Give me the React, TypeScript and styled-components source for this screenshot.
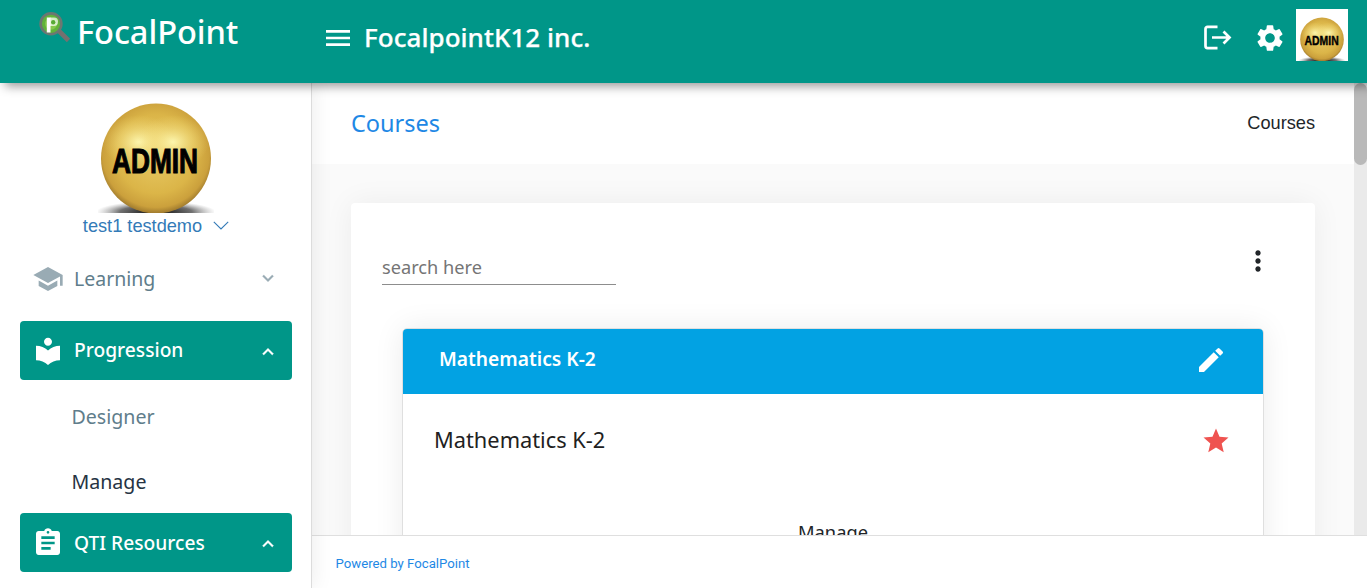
import React, { useId } from "react";
import styled, { createGlobalStyle } from "styled-components";
import {
  MdMenu,
  MdSettings,
  MdEdit,
  MdStar,
  MdMoreVert,
  MdSchool,
  MdLocalLibrary,
  MdAssignment,
} from "react-icons/md";

const Global = createGlobalStyle`
  * { box-sizing: border-box; }
  body { margin: 0; overflow: hidden; background: #fff; font-family: "Noto Sans", sans-serif; }
  svg { display: block; flex: none; }
`;

const Page = styled.div`
  display: flex;
  flex-direction: column;
  width: 1367px;
  height: 588px;
  overflow: hidden;
`;

const Header = styled.header`
  position: relative;
  z-index: 3;
  display: flex;
  flex: none;
  height: 83px;
  padding-right: 19px;
  background: #009688;
  color: #fff;
  box-shadow: 5px 3px 10px rgba(0, 0, 0, 0.42);
`;

const Brand = styled.div`
  display: flex;
  align-items: flex-start;
  width: 322px;
  padding: 10px 0 0 38px;
`;

const BrandName = styled.span`
  margin: -1px 0 0 5px;
  font-size: 32.6px;
  font-weight: 500;
  letter-spacing: -0.08px;
  line-height: 45px;
  white-space: nowrap;
`;

const HeaderTitle = styled.div`
  display: flex;
  align-items: center;
  gap: 10px;
  height: 75px;
  font-size: 26px;
  font-weight: 500;
  white-space: nowrap;
`;

const HeaderTitleText = styled.span`
  padding-bottom: 2px;
  letter-spacing: 0.04px;
  -webkit-text-stroke: 0.25px #fff;
`;

const HeaderActions = styled.div`
  display: flex;
  align-items: center;
  gap: 22px;
  height: 75px;
  margin-left: auto;
`;

const AvatarFrame = styled.div`
  display: flex;
  align-items: flex-end;
  justify-content: center;
  width: 52px;
  height: 52px;
  margin: -5px 0 0 -11.5px;
  background: #fff;
`;

const Body = styled.div`
  display: flex;
  flex: 1;
  min-height: 0;
`;

const Sidebar = styled.aside`
  position: relative;
  z-index: 2;
  flex: none;
  width: 312px;
  padding: 14px 19px 0 20px;
  background: #fff;
  border-right: 1px solid #dcdcdc;
  box-shadow: 1px 0 20px rgba(0, 0, 0, 0.08);
`;

const Profile = styled.div`
  display: flex;
  flex-direction: column;
  align-items: center;
  height: 152px;
`;

const UserLink = styled.a`
  display: flex;
  align-items: center;
  gap: 11px;
  color: #337ab7;
  font-family: "Liberation Sans", sans-serif;
  font-size: 18.2px;
  line-height: 26px;
  white-space: nowrap;
`;

const UserCaret = styled.svg`
  margin-top: -2px;
`;

const MenuItem = styled.div<{ $active?: boolean }>`
  display: flex;
  align-items: center;
  height: 59px;
  margin-bottom: ${(p) => (p.$active ? 0 : "13px")};
  padding: 0 13px 0 12px;
  border-radius: 4px;
  background: ${(p) => (p.$active ? "#009688" : "transparent")};
  color: ${(p) => (p.$active ? "#fff" : "#99abb4")};
`;

const MenuLabel = styled.span<{ $active?: boolean; $raised?: boolean }>`
  flex: 1;
  margin-left: 10px;
  padding-bottom: ${(p) => (p.$raised ? "2px" : 0)};
  color: ${(p) => (p.$active ? "#fff" : "#607d8b")};
  font-size: ${(p) => (p.$active ? "19.2px" : "19.5px")};
  font-weight: ${(p) => (p.$active ? 500 : 400)};
`;

const SubMenu = styled.div`
  height: 133px;
  padding: 4px 0 0 51.5px;
`;

const SubItem = styled.div<{ $current?: boolean }>`
  height: 65px;
  color: ${(p) => (p.$current ? "#263343" : "#607d8b")};
  font-size: 19.6px;
  line-height: 65px;
`;

const Main = styled.main`
  display: flex;
  flex: 1;
  flex-direction: column;
  min-width: 0;
`;

const ScrollArea = styled.div`
  display: flex;
  flex: 1;
  min-height: 0;
`;

const Content = styled.div`
  flex: 1;
  overflow: hidden;
  background: #fafafa;
`;

const ScrollTrack = styled.div`
  width: 13px;
  background: #eaeaea;
`;

const ScrollThumb = styled.div`
  height: 82px;
  border-radius: 6.5px;
  background: #b9b9b9;
`;

const TitleBar = styled.div`
  display: flex;
  align-items: center;
  justify-content: space-between;
  height: 81px;
  padding: 0 39px;
  background: #fff;
`;

const PageTitle = styled.h1`
  margin: 0;
  padding-bottom: 2px;
  color: #1e88e5;
  font-size: 23.5px;
  font-weight: 400;
`;

const Crumb = styled.span`
  color: #212529;
  font-family: "Liberation Sans", sans-serif;
  font-size: 18.2px;
`;

const Card = styled.section`
  height: 500px;
  margin: 39px 39px 0;
  padding: 42px 51px 0 31px;
  background: #fff;
  border-radius: 4px;
  box-shadow: 0 0 30px rgba(0, 0, 0, 0.06);
`;

const Toolbar = styled.div`
  display: flex;
  justify-content: space-between;
  height: 83px;
  color: #212529;
`;

const SearchInput = styled.input`
  width: 234px;
  height: 40px;
  padding: 4px 0 0;
  border: 0;
  border-bottom: 1px solid #8d8d8d;
  border-radius: 0;
  background: transparent;
  font-family: "Noto Sans", sans-serif;
  font-size: 18.2px;
  outline: none;
  &::placeholder { color: #757575; opacity: 1; }
`;

const MoreButton = styled.div`
  margin-right: -10px;
`;

const Course = styled.article`
  height: 400px;
  margin-left: 20px;
  border: 1px solid #dfdfdf;
  border-radius: 5px;
  box-shadow: 0 0 30px rgba(0, 0, 0, 0.08);
`;

const CourseHeader = styled.div`
  display: flex;
  align-items: center;
  justify-content: space-between;
  height: 65px;
  padding: 0 36px 4px 36px;
  border-radius: 4px 4px 0 0;
  background: #02a2e3;
  color: #fff;
  font-size: 19.2px;
  font-weight: 600;
`;

const CourseHeaderText = styled.span`
  padding-bottom: 3px;
`;

const CourseBody = styled.div`
  display: flex;
  align-items: center;
  justify-content: space-between;
  height: 93px;
  padding: 0 32px 0 31px;
  color: #212121;
  font-size: 21.8px;
`;

const CourseTitle = styled.span`
  padding-bottom: 2px;
`;

const CourseAction = styled.div`
  margin-top: 32px;
  color: #212529;
  font-size: 18.3px;
  line-height: 26px;
  text-align: center;
`;

const Footer = styled.footer`
  display: flex;
  align-items: center;
  flex: none;
  height: 53px;
  padding: 3px 0 0 23.5px;
  border-top: 1px solid #dfdfdf;
  background: #fff;
  color: #1e88e5;
  font-family: Roboto, sans-serif;
  font-size: 13.2px;
`;

function AdminBadge({ size }: { size: number }) {
  const id = useId();
  return (
    <svg width={size} height={size} viewBox="0 0 116 116">
      <defs>
        <radialGradient id={id + "b"} cx="50%" cy="46%" r="55%">
          <stop offset="0" stopColor="#e8ca66" />
          <stop offset="0.65" stopColor="#dbb548" />
          <stop offset="0.88" stopColor="#cba03c" />
          <stop offset="1" stopColor="#96722a" />
        </radialGradient>
        <radialGradient id={id + "h"}>
          <stop offset="0" stopColor="#fffcb8" stopOpacity="0.9" />
          <stop offset="0.5" stopColor="#f9e990" stopOpacity="0.45" />
          <stop offset="1" stopColor="#f3dc78" stopOpacity="0" />
        </radialGradient>
        <radialGradient id={id + "s"}>
          <stop offset="0" stopColor="#000" />
          <stop offset="0.6" stopColor="#333" stopOpacity="0.7" />
          <stop offset="1" stopColor="#888" stopOpacity="0" />
        </radialGradient>
      </defs>
      <ellipse cx="58" cy="115" rx="60" ry="11" fill={`url(#${id}s)`} />
      <circle cx="58" cy="61.5" r="55" fill={`url(#${id}b)`} />
      <ellipse cx="41" cy="45" rx="36" ry="27" fill={`url(#${id}h)`} />
      <ellipse cx="75" cy="45" rx="36" ry="27" fill={`url(#${id}h)`} />
      <text
        x="14"
        y="75.5"
        textLength="86"
        lengthAdjust="spacingAndGlyphs"
        fontFamily="'Liberation Sans', sans-serif"
        fontWeight="700"
        fontSize="34.5"
        fill="#000"
        stroke="#000"
        strokeWidth="1.1"
      >
        ADMIN
      </text>
    </svg>
  );
}

function BrandMark() {
  return (
    <svg width="34" height="34" viewBox="0 0 34 34">
      <path d="M20.5 20.5 30.5 30.5" stroke="#75706f" strokeWidth="4.6" />
      <circle cx="13" cy="13.8" r="10.4" fill="#62b33a" stroke="#6c7772" strokeWidth="2.6" />
      <circle cx="13" cy="13.8" r="6" fill="#86c84c" />
      <path d="M8.8 7.5h3.7v15H8.8z" fill="#fff" />
      <path d="M12 7.5h4a4 4.2 0 0 1 0 8.4h-4z" fill="#fff" opacity="0.7" />
      <circle cx="15.2" cy="12.3" r="2.2" fill="#58aa35" />
    </svg>
  );
}

function LogoutIcon() {
  return (
    <svg width="30" height="30" viewBox="0 0 30 30" fill="none" stroke="#fff" strokeWidth="2.7">
      <path d="M15.5 3.9H5.5a2 2 0 0 0-2 2v17.2a2 2 0 0 0 2 2h10" />
      <path d="M10 14.5h17M21.5 8.5l6 6-6 6" />
    </svg>
  );
}

function Chevron({ up }: { up?: boolean }) {
  return (
    <svg
      width="22"
      height="22"
      viewBox="0 0 24 24"
      fill="currentColor"
      stroke="currentColor"
      strokeWidth="0.4"
    >
      <path
        d={
          up
            ? "M7.41 16.41 12 11.83l4.59 4.58L18 15l-6-6-6 6z"
            : "M7.41 7.59 12 12.17l4.59-4.58L18 9l-6 6-6-6z"
        }
      />
    </svg>
  );
}

export default function App() {
  return (
    <Page>
      <Global />
      <Header>
        <Brand>
          <BrandMark />
          <BrandName>FocalPoint</BrandName>
        </Brand>
        <HeaderTitle>
          <MdMenu size={32} />
          <HeaderTitleText>FocalpointK12 inc.</HeaderTitleText>
        </HeaderTitle>
        <HeaderActions>
          <LogoutIcon />
          <MdSettings size={32} />
          <AvatarFrame>
            <AdminBadge size={46} />
          </AvatarFrame>
        </HeaderActions>
      </Header>
      <Body>
        <Sidebar>
          <Profile>
            <AdminBadge size={116} />
            <UserLink>
              test1 testdemo
              <UserCaret width="16" height="9" viewBox="0 0 16 9" fill="none" stroke="currentColor" strokeWidth="1.1">
                <path d="M.8.8 8 8 15.2.8" />
              </UserCaret>
            </UserLink>
          </Profile>
          <MenuItem>
            <MdSchool size={32} />
            <MenuLabel>Learning</MenuLabel>
            <Chevron />
          </MenuItem>
          <MenuItem $active>
            <MdLocalLibrary size={32} />
            <MenuLabel $active $raised>
              Progression
            </MenuLabel>
            <Chevron up />
          </MenuItem>
          <SubMenu>
            <SubItem>Designer</SubItem>
            <SubItem $current>Manage</SubItem>
          </SubMenu>
          <MenuItem $active>
            <MdAssignment size={32} />
            <MenuLabel $active>QTI Resources</MenuLabel>
            <Chevron up />
          </MenuItem>
        </Sidebar>
        <Main>
          <ScrollArea>
            <Content>
              <TitleBar>
                <PageTitle>Courses</PageTitle>
                <Crumb>Courses</Crumb>
              </TitleBar>
              <Card>
                <Toolbar>
                  <SearchInput placeholder="search here" />
                  <MoreButton>
                    <MdMoreVert size={32} />
                  </MoreButton>
                </Toolbar>
                <Course>
                  <CourseHeader>
                    <CourseHeaderText>Mathematics K-2</CourseHeaderText>
                    <MdEdit size={32} />
                  </CourseHeader>
                  <CourseBody>
                    <CourseTitle>Mathematics K-2</CourseTitle>
                    <MdStar size={30} color="#ef5350" />
                  </CourseBody>
                  <CourseAction>Manage</CourseAction>
                </Course>
              </Card>
            </Content>
            <ScrollTrack>
              <ScrollThumb />
            </ScrollTrack>
          </ScrollArea>
          <Footer>Powered by FocalPoint</Footer>
        </Main>
      </Body>
    </Page>
  );
}
